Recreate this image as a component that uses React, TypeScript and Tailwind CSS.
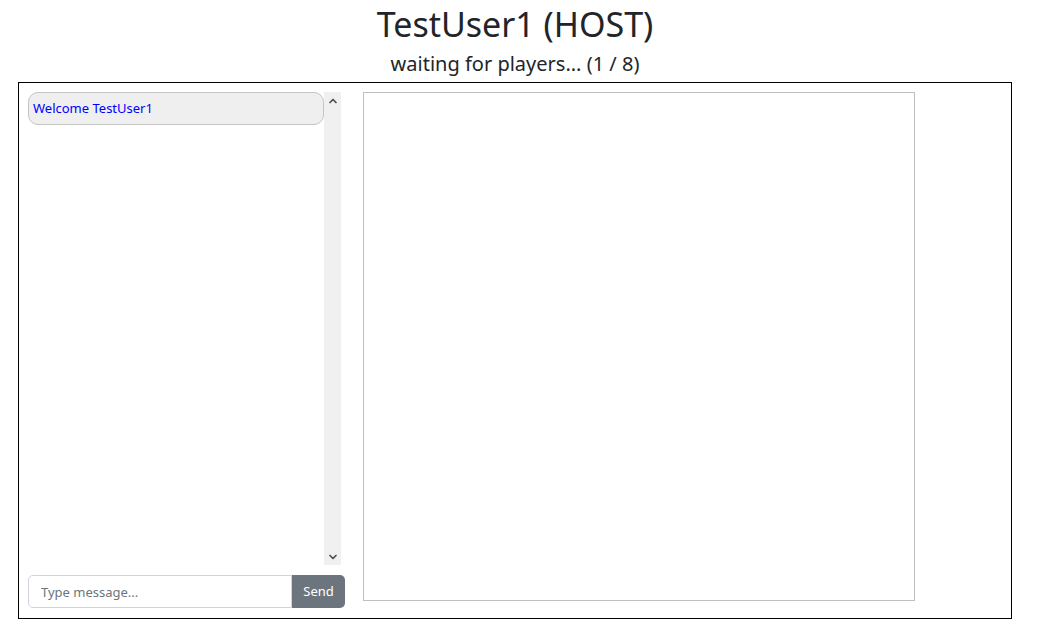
import { ChevronUp, ChevronDown } from 'lucide-react';

const font = { fontFamily: '"Noto Sans", "Open Sans", sans-serif' };

function ChatPanel() {
  const messages = ['Welcome TestUser1'];

  return (
    <div className="flex w-[317px] flex-col">
      <div className="flex h-[473px]">
        <div className="flex w-[296px] flex-col gap-1">
          {messages.map((m) => (
            <div
              key={m}
              className="flex h-[33px] items-center rounded-[10px] border border-[#c4c4c4] bg-[#efefef] px-[4px] text-[13px] text-[#0000ff]"
            >
              {m}
            </div>
          ))}
        </div>
        <div className="flex w-[17px] flex-col justify-between bg-[#f0f0f0] text-[#505050]">
          <div className="flex h-[17px] items-center justify-center">
            <ChevronUp size={12} strokeWidth={3.5} />
          </div>
          <div className="flex h-[17px] items-center justify-center">
            <ChevronDown size={12} strokeWidth={3.5} />
          </div>
        </div>
      </div>
      <div className="mt-[10px] flex h-[33px]">
        <input
          placeholder="Type message..."
          className="h-full w-[264px] rounded-l-[5px] border border-[#ced4da] px-3 text-[13px] text-[#212529] outline-none placeholder:text-[#6c757d]"
        />
        <button className="h-full w-[53px] rounded-r-[5px] bg-[#6c757d] text-[13px] text-white">
          Send
        </button>
      </div>
    </div>
  );
}

export default function App() {
  return (
    <div className="min-h-screen w-[1030px] bg-white text-[#212529]" style={font}>
      <h1 className="pt-[2px] text-center text-[34px] leading-[44px]">TestUser1 (HOST)</h1>
      <p className="mt-[4px] text-center text-[20px] leading-[28px]">waiting for players... (1 / 8)</p>
      <div className="ml-[18px] mt-[4px] flex h-[537px] w-[994px] gap-[18px] border border-black px-[9px] py-[9px]">
        <ChatPanel />
        <div className="h-[509px] w-[552px] border border-[#c0c0c0]" />
      </div>
    </div>
  );
}
